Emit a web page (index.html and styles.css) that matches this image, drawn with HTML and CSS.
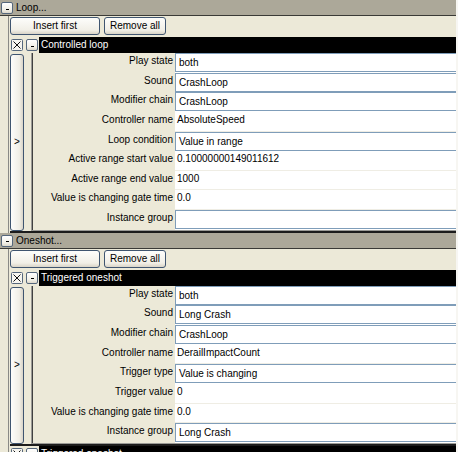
FILE: index.html
```html
<!DOCTYPE html>
<html>
<head>
<meta charset="utf-8">
<link rel="stylesheet" href="styles.css">
</head>
<body>
<div class="page">
  <section class="group">
    <div class="group-head"><span class="tog"><i></i></span><span class="group-title">Loop...</span></div>
    <div class="group-body">
      <div class="btn-row"><button class="btn btn-insert">Insert first</button><button class="btn btn-remove">Remove all</button></div>
      <div class="item">
        <div class="item-head">
          <span class="xbox"><svg width="12" height="12" viewBox="0 0 12 12"><rect x="0.5" y="0.5" width="11" height="11" rx="1" fill="#f6f5f0" stroke="#55677c"/><path d="M2.5 2.5L9.5 9.5M9.5 2.5L2.5 9.5" stroke="#111" stroke-width="1"/></svg></span>
          <span class="tog"><i></i></span>
          <div class="item-title">Controlled loop</div>
        </div>
        <div class="item-body">
          <div class="side"><div class="side-btn">&gt;</div></div>
          <div class="props">
            <div class="label">Play state</div><div class="val boxed"><div class="tb">both</div></div>
            <div class="label">Sound</div><div class="val boxed"><div class="tb">CrashLoop</div></div>
            <div class="label">Modifier chain</div><div class="val boxed"><div class="tb">CrashLoop</div></div>
            <div class="label">Controller name</div><div class="val">AbsoluteSpeed</div>
            <div class="label">Loop condition</div><div class="val boxed"><div class="tb">Value in range</div></div>
            <div class="label">Active range start value</div><div class="val">0.10000000149011612</div>
            <div class="label">Active range end value</div><div class="val">1000</div>
            <div class="label">Value is changing gate time</div><div class="val">0.0</div>
            <div class="label">Instance group</div><div class="val boxed"><div class="tb"></div></div>
          </div>
        </div>
      </div>
    </div>
  </section>
  <section class="group">
    <div class="group-head"><span class="tog"><i></i></span><span class="group-title">Oneshot...</span></div>
    <div class="group-body">
      <div class="btn-row"><button class="btn btn-insert">Insert first</button><button class="btn btn-remove">Remove all</button></div>
      <div class="item">
        <div class="item-head">
          <span class="xbox"><svg width="12" height="12" viewBox="0 0 12 12"><rect x="0.5" y="0.5" width="11" height="11" rx="1" fill="#f6f5f0" stroke="#55677c"/><path d="M2.5 2.5L9.5 9.5M9.5 2.5L2.5 9.5" stroke="#111" stroke-width="1"/></svg></span>
          <span class="tog"><i></i></span>
          <div class="item-title">Triggered oneshot</div>
        </div>
        <div class="item-body">
          <div class="side"><div class="side-btn">&gt;</div></div>
          <div class="props">
            <div class="label">Play state</div><div class="val boxed"><div class="tb">both</div></div>
            <div class="label">Sound</div><div class="val boxed"><div class="tb">Long Crash</div></div>
            <div class="label">Modifier chain</div><div class="val boxed"><div class="tb">CrashLoop</div></div>
            <div class="label">Controller name</div><div class="val">DerailImpactCount</div>
            <div class="label">Trigger type</div><div class="val boxed"><div class="tb">Value is changing</div></div>
            <div class="label">Trigger value</div><div class="val">0</div>
            <div class="label">Value is changing gate time</div><div class="val">0.0</div>
            <div class="label">Instance group</div><div class="val boxed"><div class="tb">Long Crash</div></div>
          </div>
        </div>
      </div>
      <div class="item">
        <div class="item-head">
          <span class="xbox"><svg width="12" height="12" viewBox="0 0 12 12"><rect x="0.5" y="0.5" width="11" height="11" rx="1" fill="#f6f5f0" stroke="#55677c"/><path d="M2.5 2.5L9.5 9.5M9.5 2.5L2.5 9.5" stroke="#111" stroke-width="1"/></svg></span>
          <span class="tog"><i></i></span>
          <div class="item-title">Triggered oneshot</div>
        </div>
      </div>
    </div>
  </section>
</div>
</body>
</html>
```
FILE: styles.css
```css
* { box-sizing: border-box; }
html, body { margin: 0; padding: 0; }
body {
  width: 458px;
  height: 452px;
  overflow: hidden;
  background: #f7f6f2;
  font-family: "Liberation Sans", Arial, sans-serif;
  font-size: 10px;
  color: #000;
}
.page { width: 456px; background: #ece9d8; }

.group-head {
  height: 16px;
  background: #aca899;
  border-bottom: 1px solid #3a3a36;
  display: flex;
  align-items: flex-start;
}
.group-head .tog { margin: 2px 0 0 1px; }
.group-title { margin-left: 3px; line-height: 15px; }

.tog {
  width: 12px;
  height: 12px;
  flex: none;
  border: 1px solid #55677c;
  border-radius: 2px;
  background: linear-gradient(#ffffff, #f1efe6 70%, #dcd8cb);
  display: flex;
  align-items: center;
  justify-content: center;
}
.tog i { display: block; width: 3px; height: 1px; background: #000; margin-top: 2px; }

.group-body {
  margin-left: 8px;
  border-left: 1px solid #8a8a86;
  padding-left: 1px;
}
.btn-row {
  height: 21px;
  padding-top: 1px;
  display: flex;
  gap: 4px;
}
.btn {
  height: 18px;
  padding: 0;
  border: 1px solid #3f5570;
  border-radius: 3px;
  background: linear-gradient(#fdfdfb, #f1efe7 75%, #d9d4c7);
  font-family: "Liberation Sans", Arial, sans-serif;
  font-size: 10px;
  color: #000;
  line-height: 16px;
}
.btn-insert { width: 90px; }
.btn-remove { width: 62px; }

.item-head {
  height: 16px;
  display: flex;
  align-items: flex-start;
}
.xbox { margin: 2px 0 0 1px; width: 12px; height: 12px; display: block; }
.xbox svg { display: block; }
.item-head .tog { margin: 2px 0 0 3px; }
.item-title {
  margin-left: 1px;
  flex: 1;
  height: 16px;
  background: #000;
  color: #fff;
  line-height: 15px;
  padding-left: 2px;
}

.item-body {
  display: flex;
  border-bottom: 2px solid #1c1c1c;
}
.side { width: 21px; flex: none; padding: 1px 0 0 0; display: flex; }
.side-btn {
  width: 14px;
  border: 1px solid #3f5570;
  border-radius: 3px;
  background: linear-gradient(90deg, #fdfdfb, #f0eee6 70%, #d9d4c7);
  display: flex;
  align-items: center;
  justify-content: center;
  font-size: 10px;
  padding-bottom: 2px;
}
.props {
  flex: 1;
  border-left: 1px solid #9a9a96;
  border-bottom: 1px solid #9a9a96;
  box-shadow: inset 1px 0 #404040;
  display: grid;
  grid-template-columns: 143px 1fr;
  grid-auto-rows: 19.65px;
}
.label {
  text-align: right;
  padding: 1px 2px 0 0;
  line-height: 13px;
  white-space: nowrap;
}
.val {
  background: #fff;
  border-bottom: 1px solid #efede4;
  padding: 1px 0 0 2px;
  line-height: 13px;
  white-space: nowrap;
  overflow: hidden;
}
.val.boxed { padding: 0; border-bottom: none; }
.tb {
  height: 19px;
  border: 1px solid #7f9db9;
  border-right: none;
  padding-left: 3px;
  line-height: 17px;
}
```
